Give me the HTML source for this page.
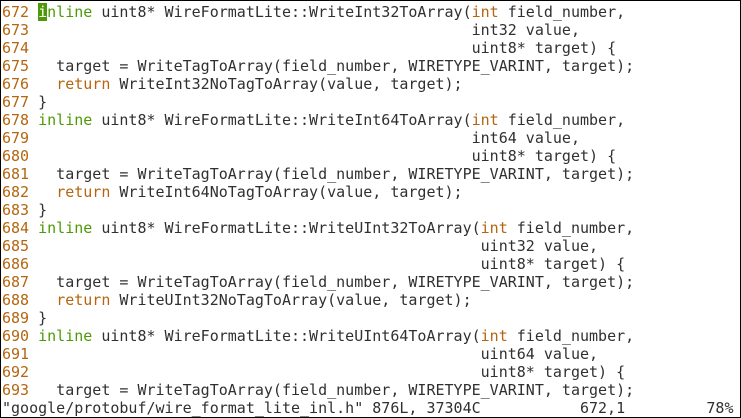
<!DOCTYPE html>
<html><head><style>
html,body{margin:0;padding:0;background:#fff;}
#w{position:relative;width:739px;height:416px;border:1px solid #000;overflow:hidden;background:#fff;}
pre{position:absolute;left:1px;top:2px;margin:0;font-family:"DejaVu Sans Mono","Liberation Mono",monospace;font-size:15px;line-height:18px;color:#303030;letter-spacing:0;white-space:pre;}
.n{color:#b5650f}.k{color:#4e9a06}.t{color:#b5650f}
.c{background:#4e9a06;color:#fff}
</style></head><body><div id="w"><pre><span class="n">672 </span><span class="c">i</span><span class="k">nline</span> uint8* WireFormatLite::WriteInt32ToArray(<span class="t">int</span> field_number,
<span class="n">673 </span>                                                int32 value,
<span class="n">674 </span>                                                uint8* target) {
<span class="n">675 </span>  target = WriteTagToArray(field_number, WIRETYPE_VARINT, target);
<span class="n">676 </span>  <span class="t">return</span> WriteInt32NoTagToArray(value, target);
<span class="n">677 </span>}
<span class="n">678 </span><span class="k">inline</span> uint8* WireFormatLite::WriteInt64ToArray(<span class="t">int</span> field_number,
<span class="n">679 </span>                                                int64 value,
<span class="n">680 </span>                                                uint8* target) {
<span class="n">681 </span>  target = WriteTagToArray(field_number, WIRETYPE_VARINT, target);
<span class="n">682 </span>  <span class="t">return</span> WriteInt64NoTagToArray(value, target);
<span class="n">683 </span>}
<span class="n">684 </span><span class="k">inline</span> uint8* WireFormatLite::WriteUInt32ToArray(<span class="t">int</span> field_number,
<span class="n">685 </span>                                                 uint32 value,
<span class="n">686 </span>                                                 uint8* target) {
<span class="n">687 </span>  target = WriteTagToArray(field_number, WIRETYPE_VARINT, target);
<span class="n">688 </span>  <span class="t">return</span> WriteUInt32NoTagToArray(value, target);
<span class="n">689 </span>}
<span class="n">690 </span><span class="k">inline</span> uint8* WireFormatLite::WriteUInt64ToArray(<span class="t">int</span> field_number,
<span class="n">691 </span>                                                 uint64 value,
<span class="n">692 </span>                                                 uint8* target) {
<span class="n">693 </span>  target = WriteTagToArray(field_number, WIRETYPE_VARINT, target);
"google/protobuf/wire_format_lite_inl.h" 876L, 37304C           672,1         78%</pre></div></body></html>
